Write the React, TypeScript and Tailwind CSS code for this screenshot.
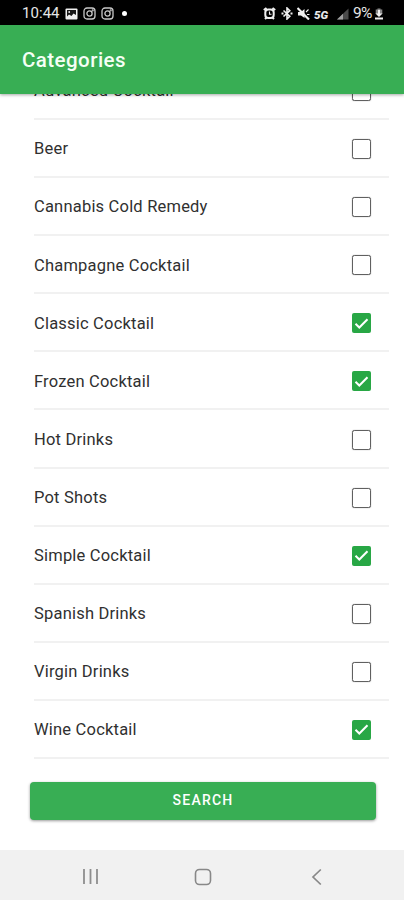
import React from "react";

const categories = [
  { name: "Advanced Cocktail", checked: false },
  { name: "Beer", checked: false },
  { name: "Cannabis Cold Remedy", checked: false },
  { name: "Champagne Cocktail", checked: false },
  { name: "Classic Cocktail", checked: true },
  { name: "Frozen Cocktail", checked: true },
  { name: "Hot Drinks", checked: false },
  { name: "Pot Shots", checked: false },
  { name: "Simple Cocktail", checked: true },
  { name: "Spanish Drinks", checked: false },
  { name: "Virgin Drinks", checked: false },
  { name: "Wine Cocktail", checked: true },
];

function CameraIcon() {
  return (
    <svg width="13" height="13" viewBox="0 0 13 13" fill="none" stroke="#c8c8c8" strokeWidth="1.3">
      <rect x="1" y="1" width="11" height="11" rx="3" />
      <circle cx="6.5" cy="6.5" r="2.6" />
      <circle cx="9.7" cy="3.4" r="0.4" />
    </svg>
  );
}

function StatusBar() {
  return (
    <div className="flex h-[25px] shrink-0 items-center bg-black pt-[2px] pr-[20px] pl-[22px] text-white">
      <span className="w-[43px] text-[15px] leading-none tracking-[0.05px] whitespace-nowrap text-[#e6e6e6]">10:44</span>
      <div className="flex items-center gap-[5px]">
        <svg width="13" height="12" viewBox="0 0 13 12">
          <rect x="0.5" y="0.5" width="12" height="11" rx="1" fill="#f0f0f0" />
          <path d="M2 2h9v5L8.500 5.500 6.500 8 4 6.500 2 8.500z" fill="#161616" />
          <circle cx="4.2" cy="4" r="0.9" fill="#f0f0f0" />
        </svg>
        <CameraIcon />
        <CameraIcon />
      </div>
      <span className="ml-[8px] size-[5px] rounded-full bg-white" />
      <div className="ml-auto flex items-center">
        <svg width="13" height="13" viewBox="0 0 13 13" fill="none" stroke="#f0f0f0" strokeWidth="2">
          <path d="M0.800 3L3.500 1M12.200 3L9.500 1M2 12l1.800-1.800M11 12l-1.800-1.800" />
          <rect x="2.3" y="2.5" width="8.4" height="8.4" rx="3" />
          <path d="M6.500 4.500v2.700h2" strokeWidth="1.1" />
        </svg>
        <svg className="ml-[5px]" width="12" height="13" viewBox="0 0 12 13" fill="none" stroke="#f0f0f0" strokeWidth="1.6">
          <path d="M2.500 3.500l6.300 5.800L6 12V1l2.800 2.700-6.300 5.800" />
          <path d="M0.500 6.500h2M9.500 6.500h2" strokeWidth="1.8" />
        </svg>
        <svg className="ml-[4px]" width="13" height="13" viewBox="0 0 13 13">
          <path d="M1 5h3L7.500 2v9L4 8.500H1z" fill="#f0f0f0" />
          <path d="M0.500 1L12 12.500" stroke="#f0f0f0" strokeWidth="2.2" />
          <path d="M9 5l2.500-2.500M10 7.500h2.500" stroke="#f0f0f0" strokeWidth="1.1" />
        </svg>
        <span className="ml-[4px] w-[17px] pt-[4px] text-[11.5px] leading-none font-black tracking-[0.1px] text-[#e8e8e8] italic">5G</span>
        <svg className="ml-[6px]" width="12" height="12" viewBox="0 0 12 12">
          <path d="M0 11.500L11.500 0.500v11z" fill="#4a4a4a" />
          <path d="M0 11.500L6 5.800v5.700z" fill="#a0a0a0" />
        </svg>
        <span className="ml-[4px] w-[21px] pt-[1px] text-[15.5px] leading-none tracking-[-0.7px] whitespace-nowrap text-[#e6e6e6]">9%</span>
        <svg width="10" height="12" viewBox="0 0 9 12">
          <path d="M3 0.500h3v1h1.800v4.500H1.200V1.500H3z" fill="#888" />
          <path d="M3.500 2h2v3.500H8L4.500 9 1 5.500h2.500zM0.500 9.500h8v2h-8z" fill="#f0f0f0" />
        </svg>
      </div>
    </div>
  );
}

function Checkbox({ checked }: { checked: boolean }) {
  return checked ? (
    <span className="flex h-[20px] w-[19px] items-center justify-center rounded-[2px] bg-[#28a745]">
      <svg width="19" height="19" viewBox="0 0 19 19" fill="none" stroke="#fff" strokeWidth="2">
        <path d="M3.500 9.800l3.800 3.700 8.200-8.300" />
      </svg>
    </span>
  ) : (
    <span className="h-[20px] w-[19px] rounded-[2.5px] border-[1.5px] border-[#606060] bg-white shadow-[0_0_1px_#777]" />
  );
}

export default function App() {
  return (
    <div className="flex h-[900px] w-[404px] flex-col overflow-hidden bg-white font-['Roboto',sans-serif]">
      <StatusBar />
      <header className="z-10 flex h-[69px] shrink-0 items-center bg-[#38ae54] pt-[2px] pl-[22px] shadow-[0_1px_3px_rgba(0,0,0,0.35)]">
        <h1 className="text-[20.5px] leading-none font-medium tracking-[0.45px] text-[#f5fff5]">Categories</h1>
      </header>
      <main className="flex flex-1 flex-col overflow-hidden">
        <ul className="-mt-[32px] mr-[15px] ml-[34px]">
          {categories.map((c) => (
            <li key={c.name} className="flex h-[58.08px] items-center justify-between border-b-2 border-[#f1f1f1] pt-[2px] pr-[18px]">
              <span className="pt-[1px] text-[16.5px] leading-none tracking-[0.2px] text-[#303030]">{c.name}</span>
              <Checkbox checked={c.checked} />
            </li>
          ))}
        </ul>
        <button className="mt-[23px] mr-[28px] ml-[30px] h-[38px] shrink-0 rounded-[4px] bg-[#38ae54] pb-[2px] text-[14px] leading-none font-medium tracking-[1.2px] text-white shadow-[0_1px_3px_rgba(0,0,0,0.4)]">
          SEARCH
        </button>
      </main>
      <nav className="flex h-[50px] shrink-0 items-center bg-[#f1f1f1] pt-[3px] pl-[82px]">
        <svg width="17" height="17" viewBox="0 0 17 17" stroke="#8e8e8e" strokeWidth="1.8">
          <path d="M2 1v15M8.500 1v15M15 1v15" />
        </svg>
        <svg className="ml-[95px]" width="18" height="18" viewBox="0 0 18 18" fill="none" stroke="#888" strokeWidth="1.6">
          <rect x="1.5" y="1.5" width="15" height="15" rx="4" />
        </svg>
        <svg className="ml-[99px]" width="12" height="18" viewBox="0 0 12 18" fill="none" stroke="#888" strokeWidth="1.7">
          <path d="M9.800 1.500L2 9l7.800 7.500" />
        </svg>
      </nav>
    </div>
  );
}
